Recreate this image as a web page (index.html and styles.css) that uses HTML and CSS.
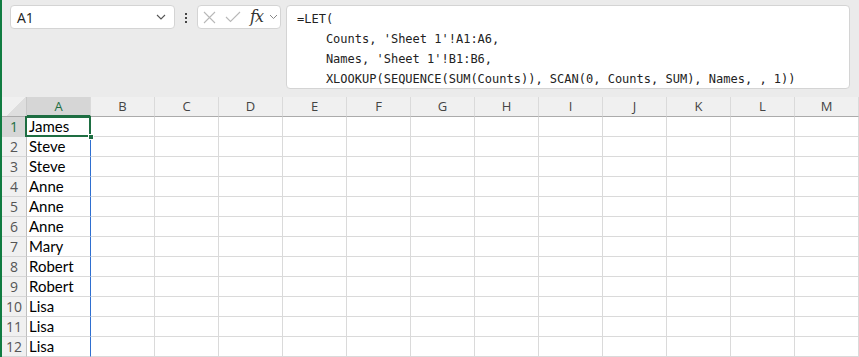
FILE: index.html
```html
<!DOCTYPE html>
<html lang="en">
<head>
    <meta charset="UTF-8">
    <title>Sheet 1</title>
    <link rel="stylesheet" href="styles.css">
</head>
<body>
    <div class="toolbar">
        <div class="name-box">
            <span>A1</span>
            <svg class="chev" width="10" height="6" viewBox="0 0 10 6"><path d="M1 1 L5 5 L9 1" fill="none" stroke="#555" stroke-width="1.1"/></svg>
        </div>
        <div class="dots"><i></i><i></i><i></i></div>
        <div class="fx-box">
            <svg class="cancel" width="13" height="13" viewBox="0 0 13 13"><path d="M1 1 L12 12 M12 1 L1 12" stroke="#b8b8b8" stroke-width="1.1"/></svg>
            <svg class="enter" width="16" height="12" viewBox="0 0 16 12"><path d="M1 6 L5.5 10.5 L15 1" fill="none" stroke="#b8b8b8" stroke-width="1.1"/></svg>
            <span class="fx">fx</span>
            <svg class="chev-small" width="9" height="6" viewBox="0 0 9 6"><path d="M1 1 L4.5 4.5 L8 1" fill="none" stroke="#888" stroke-width="1"/></svg>
        </div>
        <div class="formula">=LET(
    Counts, 'Sheet 1'!A1:A6,
    Names, 'Sheet 1'!B1:B6,
    XLOOKUP(SEQUENCE(SUM(Counts)), SCAN(0, Counts, SUM), Names, , 1))</div>
    </div>

    <div class="sheet">
        <div class="corner"></div>
        <div class="col-head active">A</div>
        <div class="col-head">B</div>
        <div class="col-head">C</div>
        <div class="col-head">D</div>
        <div class="col-head">E</div>
        <div class="col-head">F</div>
        <div class="col-head">G</div>
        <div class="col-head">H</div>
        <div class="col-head">I</div>
        <div class="col-head">J</div>
        <div class="col-head">K</div>
        <div class="col-head">L</div>
        <div class="col-head">M</div>
    </div>
    <div class="sheet" id="rows"></div>

    <script>
        var names = ['James', 'Steve', 'Steve', 'Anne', 'Anne', 'Anne', 'Mary', 'Robert', 'Robert', 'Lisa', 'Lisa', 'Lisa'];
        var rows = document.getElementById('rows');
        var html = '';
        for (var r = 0; r < names.length; r++) {
            html += '<div class="row-head' + (r === 0 ? ' active' : '') + '">' + (r + 1) + '</div>';
            html += '<div class="cell col-a' + (r === 0 ? ' selected' : ' spill') + '">' + names[r] + '</div>';
            for (var c = 1; c < 13; c++) {
                html += '<div class="cell"></div>';
            }
        }
        rows.innerHTML = html;
    </script>
</body>
</html>
```

FILE: styles.css
```css
body {
    margin: 0;
    width: 857px;
    height: 357px;
    overflow: hidden;
    border-left: 2px solid #107c41;
    background-color: #fff;
    font-family: "Open Sans", sans-serif;
}
.toolbar {
    display: flex;
    align-items: flex-start;
    height: 97px;
    padding: 5px 0 0 8px;
    box-sizing: border-box;
    background-color: #ebebeb;
}
.name-box {
    display: flex;
    align-items: center;
    justify-content: space-between;
    width: 165px;
    height: 24px;
    padding: 0 8px 0 6px;
    box-sizing: border-box;
    background-color: #fff;
    border: 1px solid #d4d4d4;
    border-radius: 4px;
    font-size: 14px;
    color: #222;
}
.dots {
    display: flex;
    flex-direction: column;
    gap: 2px;
    width: 22px;
    align-items: center;
    padding-top: 8px;
}
.dots i {
    display: block;
    width: 2px;
    height: 2px;
    background-color: #444;
}
.fx-box {
    display: flex;
    align-items: center;
    width: 84px;
    height: 24px;
    padding: 0 0 0 5px;
    box-sizing: border-box;
    background-color: #fff;
    border: 1px solid #d4d4d4;
    border-radius: 4px;
}
.enter {
    margin-left: 9px;
}
.fx {
    margin-left: 9px;
    font-family: "DejaVu Serif", serif;
    font-style: italic;
    font-size: 16px;
    line-height: 20px;
    letter-spacing: -1px;
    color: #333;
}
.chev-small {
    margin-left: 6px;
}
.formula {
    margin-left: 5px;
    width: 564px;
    height: 84px;
    padding: 3px 10px;
    box-sizing: border-box;
    background-color: #fff;
    border: 1px solid #d4d4d4;
    border-radius: 4px;
    font-family: "DejaVu Sans Mono", monospace;
    font-size: 12px;
    line-height: 20px;
    white-space: pre;
    color: #222;
}
.sheet {
    display: grid;
    grid-template-columns: 25px repeat(13, 64px);
    grid-auto-rows: 20px;
}
.corner, .col-head, .row-head, .cell {
    box-sizing: border-box;
    border-right: 1px solid #dadada;
    border-bottom: 1px solid #dadada;
}
.corner {
    background: linear-gradient(135deg, #f0f0f0 55%, #dedede 55%);
    border-right-color: #c8c8c8;
    border-bottom-color: #ababab;
}
.col-head {
    background-color: #f0f0f0;
    border-bottom-color: #ababab;
    text-align: center;
    font-size: 13px;
    line-height: 19px;
    color: #444;
}
.row-head {
    background-color: #f0f0f0;
    border-right-color: #c0c0c0;
    border-bottom-color: #d6d6d6;
    text-align: center;
    font-size: 14px;
    line-height: 19px;
    color: #555;
}
.active {
    background-color: #d6d6d6;
    color: #1e6e42;
}
.col-head.active {
    border-bottom: 2px solid #1e6e42;
    line-height: 18px;
}
.row-head.active {
    background-color: #d6d6d6;
}
.cell {
    padding-left: 2px;
    font-family: "Lato", sans-serif;
    font-size: 15px;
    line-height: 19px;
    color: #000;
}
.spill {
    border-right: 1px solid #2f6fd0;
}
.selected {
    position: relative;
}
.selected::after {
    content: "";
    position: absolute;
    left: -2px;
    top: -1px;
    right: -1px;
    bottom: -1px;
    border: 2px solid #1e6e42;
}
.selected::before {
    content: "";
    position: absolute;
    right: -4px;
    bottom: -4px;
    width: 6px;
    height: 6px;
    background-color: #1e6e42;
    border: 1px solid #fff;
    box-sizing: border-box;
    z-index: 1;
}
```
